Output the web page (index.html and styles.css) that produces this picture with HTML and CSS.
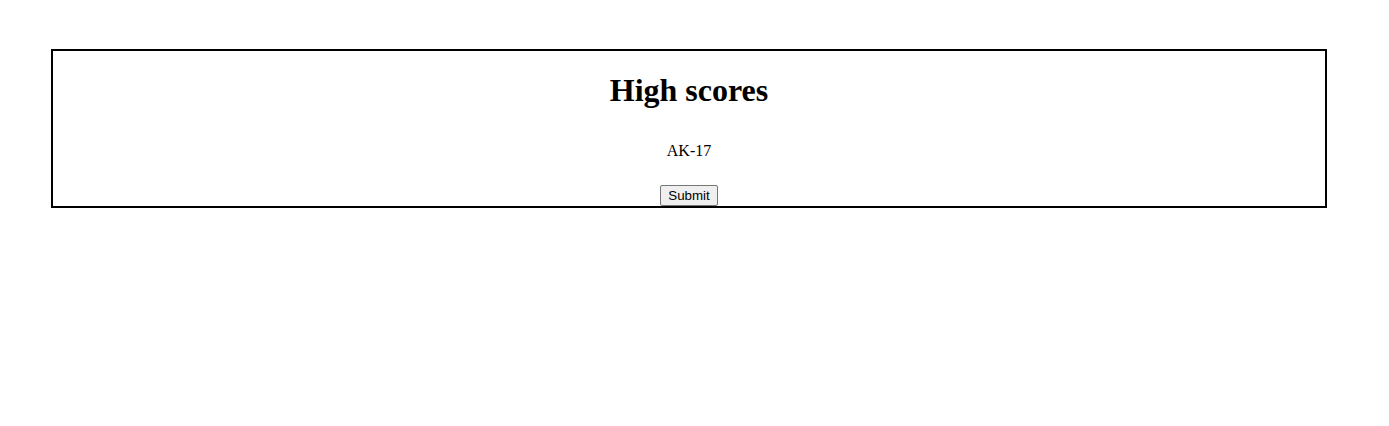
FILE: index.html
```html
<!DOCTYPE html>
<html>
<head>
<meta charset="utf-8">
<title>High scores</title>
<link rel="stylesheet" href="styles.css">
</head>
<body>
<div class="board">
  <h1 class="title">High scores</h1>
  <p class="name">AK-17</p>
  <form class="entry">
    <button type="button" class="submit">Submit</button>
  </form>
</div>
</body>
</html>
```
FILE: styles.css
```css
html, body {
  margin: 0;
  padding: 0;
  background: #fff;
}
body {
  font-family: "Liberation Serif", "Times New Roman", serif;
  color: #000;
}
.board {
  margin: 49px 62px 0 51px;
  border: 2px solid #000;
  text-align: center;
}
.title {
  font-size: 32px;
  font-weight: bold;
  margin: 21px 0;
}
.name {
  font-size: 16px;
  margin: 33px 0 0;
}
.entry {
  margin: 0;
  padding-top: 25px;
  display: flex;
  justify-content: center;
}
.submit {
  font: 13.333px "Liberation Sans", Arial, sans-serif;
  line-height: 17px;
  height: 21px;
  margin: 0;
  padding: 1px 7px;
  border: 1px solid #767676;
  border-radius: 2px;
  background: #efefef;
  color: #000;
}
```
